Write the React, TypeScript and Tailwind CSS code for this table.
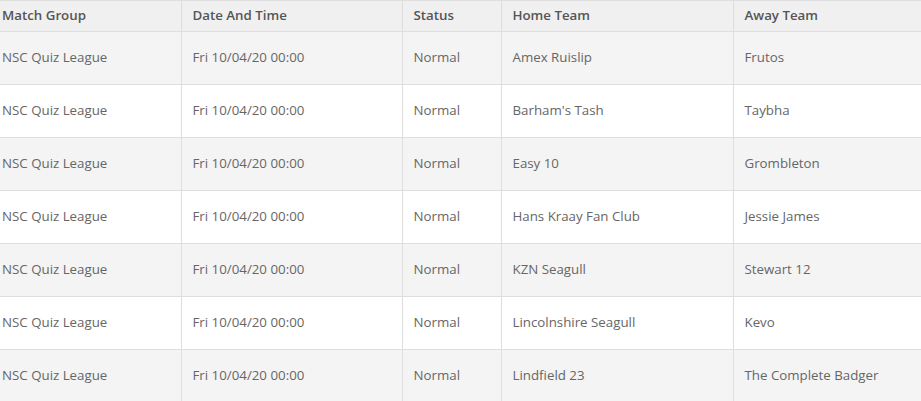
const rows = [
  ['Amex Ruislip', 'Frutos'],
  ["Barham's Tash", 'Taybha'],
  ['Easy 10', 'Grombleton'],
  ['Hans Kraay Fan Club', 'Jessie James'],
  ['KZN Seagull', 'Stewart 12'],
  ['Lincolnshire Seagull', 'Kevo'],
  ['Lindfield 23', 'The Complete Badger'],
];

export default function App() {
  return (
    <div className="w-[921px] h-[401px] overflow-hidden bg-white" style={{ fontFamily: '"Open Sans", sans-serif' }}>
      <table className="w-[921px] table-fixed border-collapse text-[13.3px]">
        <colgroup>
          <col className="w-[181px]" />
          <col className="w-[221px]" />
          <col className="w-[99px]" />
          <col className="w-[232px]" />
          <col />
        </colgroup>
        <thead>
          <tr className="h-[31px] bg-[#f0f0f0] text-[#555] text-left border-t border-b border-[#dedede]">
            <th className="pl-[2px] font-semibold border-r border-[#dedede]">Match Group</th>
            <th className="pl-[11px] font-semibold border-r border-[#dedede]">Date And Time</th>
            <th className="pl-[11px] font-semibold border-r border-[#dedede]">Status</th>
            <th className="pl-[11px] font-semibold border-r border-[#dedede]">Home Team</th>
            <th className="pl-[11px] font-semibold">Away Team</th>
          </tr>
        </thead>
        <tbody className="text-[#666]">
          {rows.map(([home, away], i) => (
            <tr key={home} className={`h-[53px] border-b border-[#dedede] ${i % 2 === 0 ? 'bg-[#f4f4f4]' : 'bg-white'}`}>
              <td className="pl-[2px] border-r border-[#dedede]">NSC Quiz League</td>
              <td className="pl-[11px] border-r border-[#dedede]">Fri 10/04/20 00:00</td>
              <td className="pl-[11px] border-r border-[#dedede]">Normal</td>
              <td className="pl-[11px] border-r border-[#dedede]">{home}</td>
              <td className="pl-[11px]">{away}</td>
            </tr>
          ))}
        </tbody>
      </table>
    </div>
  );
}
